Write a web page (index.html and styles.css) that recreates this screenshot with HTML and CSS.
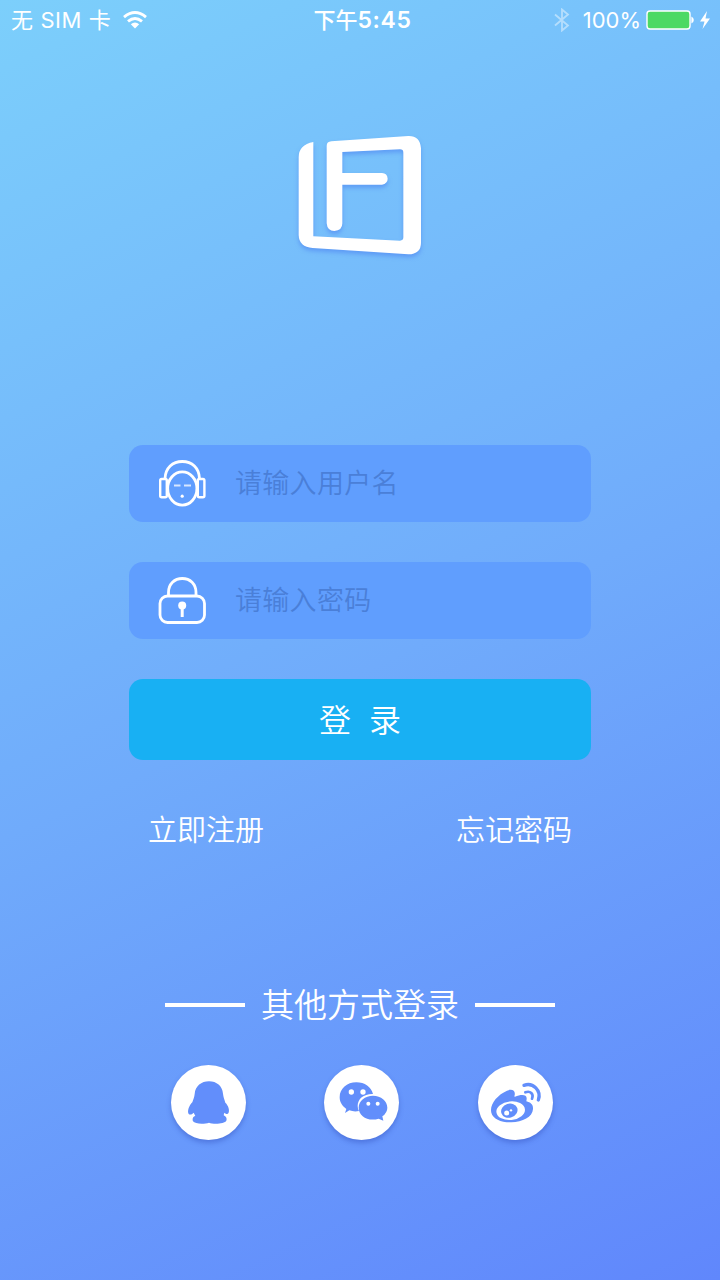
FILE: index.html
```html
<!DOCTYPE html>
<html lang="zh-CN">
<head>
  <meta charset="UTF-8" />
  <title>登录</title>
  <link rel="stylesheet" href="styles.css">
</head>
<body>

<header class="status-bar">
  <div class="status-left">
    <span class="carrier">无 SIM 卡</span>
    <svg class="wifi" viewBox="0 0 24 18" width="24" height="18" fill="none" stroke="#fff" stroke-width="2.9">
      <path d="M1 6.2Q12 -3 23 6.2" />
      <path d="M5 10.4Q12 4.6 19 10.4" />
      <path d="M7.8 13.2Q12 9.6 16.2 13.2L12 17.4Z" fill="#fff" stroke="none" />
    </svg>
  </div>
  <div class="time">下午<b>5:45</b></div>
  <div class="status-right">
    <svg class="bluetooth" viewBox="0 0 16 24" width="16" height="24" fill="none" stroke="#fff" stroke-width="1.8">
      <path d="M1 6.5L14 17.5L8 22.5V1.5L14 6.5L1 17.5" />
    </svg>
    <span class="percent">100%</span>
    <svg class="battery" viewBox="0 0 48 20" width="48" height="20">
      <rect x="1" y="1" width="43" height="18" rx="3" fill="#4cd964" stroke="#fff" stroke-width="1.4" />
      <path d="M45.4 6.5Q47.8 7.5 47.8 10T45.4 13.5Z" fill="#fff" />
    </svg>
    <svg class="bolt" viewBox="0 0 12 18" width="12" height="18">
      <path d="M8 0L1 10.5H5.5L3.5 18L11 7.5H6.5Z" fill="#fff" />
    </svg>
  </div>
</header>

<main class="login">
  <svg class="logo" viewBox="0 0 480 450" width="160" height="150">
    <path fill="#fff" d="M100 66Q56 74 56 112V345Q57 381 98 384L385 403Q423 402 423 368V85Q420 47 385 48L154 64Q140 65 140 78V310Q142 333 163 333Q187 332 187 310V194H306Q323 190 323 176Q322 160 306 159H187V96L360 88Q370 88 370 98V352Q370 362 360 362L100 349Z" />
  </svg>

  <form class="form">
    <label class="field">
      <svg viewBox="0 0 48 48" width="48" height="48" fill="none" stroke="#fff" stroke-width="2.8">
        <path d="M7 19.5C7.5 9 14.5 2.5 24.3 2.5S41 9 41.5 19.5" />
        <ellipse cx="24.3" cy="29.5" rx="14.6" ry="16.6" />
        <rect x="2.2" y="20" width="6.6" height="18.2" rx="1.5" stroke-width="2.4" />
        <rect x="39.8" y="20" width="6.6" height="18.2" rx="1.5" stroke-width="2.4" />
        <path d="M16 26.5H22.5M26 26.5H33" stroke-width="1.8" opacity=".75" />
        <circle cx="24.2" cy="37.2" r="1.6" fill="#fff" stroke="none" />
      </svg>
      <input type="text" placeholder="请输入用户名">
    </label>
    <label class="field">
      <svg viewBox="0 0 48 48" width="48" height="48" fill="none" stroke="#fff" stroke-width="2.8">
        <rect x="2" y="20" width="44.5" height="26.5" rx="7.5" />
        <path d="M10.5 20V16.5C10.500 8 16.5 2.500 24.3 2.500S38 8 38 16.500V20" />
        <path d="M24.2 29V41" stroke-width="3" />
        <circle cx="24.2" cy="29.5" r="4" fill="#fff" stroke="none" />
      </svg>
      <input type="password" placeholder="请输入密码">
    </label>
    <button class="submit" type="button"><span>登</span><span>录</span></button>
    <div class="links">
      <a>立即注册</a>
      <a>忘记密码</a>
    </div>
  </form>

  <div class="other-title"><span>其他方式登录</span></div>

  <div class="socials">
    <!-- QQ -->
    <a class="social">
      <svg viewBox="0 0 225 225" width="75" height="75" fill="#628efb">
        <path d="M114 49C137 49 154 63 156 86C157 96 160 102 163 113C172 121 177 137 172 145C169 149 164 146 160 143L158 151C165 154 169 160 166 167C161 177 126 178 114 173C101 178 72 178 66 169C64 162 65 155 73 153L68 143C63 148 57 151 53 147C48 140 54 121 64 112C67 103 70 97 71 87C73 63 91 49 114 49Z" />
      </svg>
    </a>
    <!-- 微信 -->
    <a class="social">
      <svg viewBox="0 0 225 225" width="75" height="75" fill="#628efb">
        <path d="M97 52C122 52 142 66 147 87C120 86 101 101 101 123Q101 132 105 138Q90 141 76 136L63 144L67 132C56 124 47 113 47 97C47 71 69 52 97 52Z" />
        <path d="M147 92C171 92 190 107 190 128Q190 143 175 154L178 167L164 161C132 171 104 153 104 128C104 107 123 92 147 92Z" />
        <g fill="#fff">
          <circle cx="82" cy="81" r="8" /><circle cx="117" cy="81" r="8" />
          <circle cx="133" cy="116" r="6" /><circle cx="161" cy="116" r="6" />
        </g>
      </svg>
    </a>
    <!-- 微博 -->
    <a class="social">
      <svg viewBox="0 0 225 225" width="75" height="75" fill="#628efb">
        <path d="M40 143C34 119 57 90 87 77C102 71 113 76 110 91Q108 96 111 95C129 88 146 88 146 100Q146 104 145 109C158 112 166 119 165 132C164 156 133 171 100 172C70 173 45 162 40 143Z" />
        <ellipse cx="98" cy="137" rx="43" ry="28" fill="#fff" transform="rotate(-6 98 137)" />
        <ellipse cx="94" cy="137" rx="25" ry="21" transform="rotate(-18 94 137)" />
        <circle cx="86" cy="144" r="7.5" fill="#fff" />
        <circle cx="99" cy="136" r="3.5" fill="#fff" />
        <g fill="none" stroke="#628efb" stroke-width="10" stroke-linecap="round">
          <path d="M138 61C165 51 191 77 181 105" />
          <path d="M142 82C157 76 168 87 162 101" stroke-width="8" />
        </g>
      </svg>
    </a>
  </div>
</main>

</body>
</html>
```
FILE: styles.css
```css
* {
  box-sizing: border-box;
}
body {
  margin: 0;
  height: 1280px;
  overflow: hidden;
  font-family: Inter, 'Noto Sans CJK SC', sans-serif;
  color: #fff;
  background: linear-gradient(155deg, #7ccffb 0%, #70abfb 52%, #6087fc 100%);
}
.status-bar {
  height: 40px;
  padding: 0 9px 0 11px;
  display: grid;
  grid-template-columns: 1fr auto 1fr;
  align-items: center;
  font-size: 22px;
  line-height: 40px;
}
.status-left,
.status-right {
  display: flex;
  align-items: center;
}
.carrier {
  letter-spacing: 0.6px;
}
.wifi {
  margin-left: 12px;
}
.time {
  padding-left: 3px;
  font-weight: 500;
}
.time b {
  font-weight: 600;
  font-size: 23px;
  letter-spacing: 0.6px;
}
.status-right {
  justify-content: flex-end;
}
.bluetooth {
  opacity: 0.45;
  margin-right: 13px;
}
.battery {
  margin: 0 5px 0 5px;
}
.login {
  display: flex;
  flex-direction: column;
  align-items: center;
}
.logo {
  margin-top: 80px;
  filter: drop-shadow(0 3px 2px rgba(70, 120, 240, 0.5));
}
.form {
  width: 462px;
  margin-top: 175px;
}
.field {
  display: flex;
  align-items: center;
  height: 77px;
  margin-bottom: 40px;
  padding: 0 0 1px 29px;
  border-radius: 14px;
  background: #609efe;
}
.field input {
  flex: 1;
  min-width: 0;
  height: 60px;
  margin-left: 29px;
  padding: 0 0 3px;
  border: none;
  outline: none;
  background: none;
  color: #fff;
  font: 350 27px 'Noto Sans CJK SC', sans-serif;
  letter-spacing: 0.3px;
}
.field input::placeholder {
  color: #4a7fd8;
}
.submit {
  display: flex;
  justify-content: center;
  align-items: center;
  gap: 18px;
  width: 100%;
  height: 81px;
  padding: 0 0 3px;
  border: none;
  border-radius: 14px;
  background: #18b0f3;
  color: #fff;
  font: 350 32px 'Noto Sans CJK SC', sans-serif;
}
.links {
  display: flex;
  justify-content: space-between;
  margin-top: 51px;
  padding: 0 19px;
  font-size: 29px;
  font-weight: 350;
  line-height: 40px;
}
.other-title {
  display: flex;
  align-items: center;
  gap: 16px;
  margin-top: 130px;
  font-size: 33px;
  font-weight: 350;
  line-height: 48px;
}
.other-title::before,
.other-title::after {
  content: '';
  width: 80px;
  height: 4px;
  background: #fff;
}
.socials {
  display: flex;
  gap: 78.5px;
  margin: 36px 0 0 3px;
}
.social {
  width: 75px;
  height: 75px;
  border-radius: 50%;
  background: #fff;
  box-shadow: 0 3px 5px rgba(50, 80, 190, 0.45);
}
.social svg {
  display: block;
}
```
